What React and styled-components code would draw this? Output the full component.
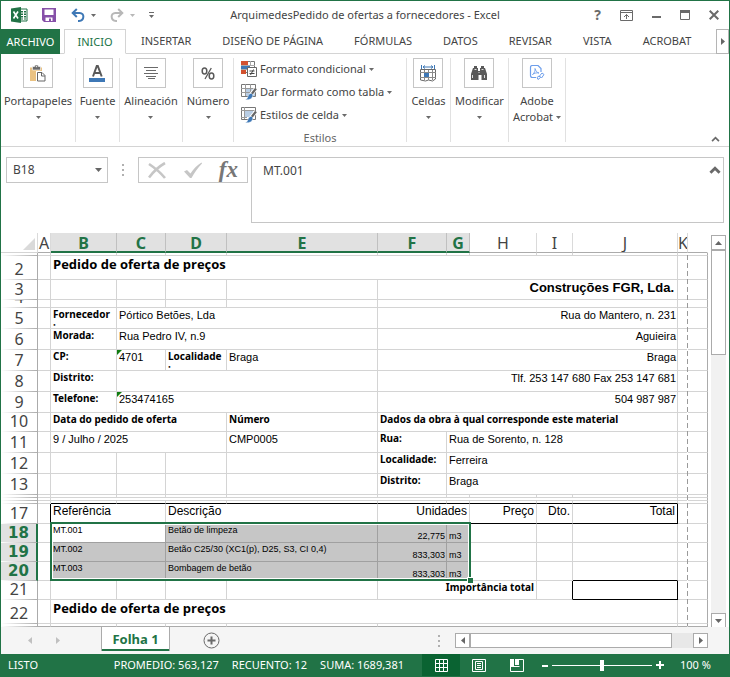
import React from 'react';
import styled, { createGlobalStyle, css } from 'styled-components';

const GREEN = '#217346';
const LINE = '#d4d4d4';
const EDGE = '#ababab';
const INK = '#444444';

const GlobalStyle = createGlobalStyle`
  *, *::before, *::after { box-sizing: border-box; }
  body { margin: 0; background: #fff; font-family: "Noto Sans", "Open Sans", sans-serif; }
  button, input, textarea { font: inherit; color: inherit; margin: 0; padding: 0; border: 0; background: none; border-radius: 0; }
  svg { display: block; flex: none; }
`;

const Window = styled.div`
  display: flex;
  flex-direction: column;
  min-height: 100vh;
  border: 1px solid ${GREEN};
  border-bottom: 0;
  color: ${INK};
  font-size: 12px;
  line-height: 16px;
`;

/* ---------- title bar ---------- */
const TitleBar = styled.header`
  display: grid;
  grid-template-columns: 1fr auto 1fr;
  align-items: center;
  height: 28px;
  padding: 0 10px;
`;
const Title = styled.h1`
  margin: 0;
  font-size: 11px;
  font-weight: 400;
`;
const QuickAccess = styled.div`
  display: flex;
  align-items: center;
  gap: 14px;
`;
const SplitTool = styled.div`
  display: flex;
  align-items: center;
  gap: 6px;
`;
const WindowControls = styled.div`
  display: flex;
  align-items: center;
  justify-content: flex-end;
  gap: 19px;
`;
const IconButton = styled.button`
  display: flex;
  align-items: center;
  justify-content: center;
  color: #6a6a6a;
  font-size: 14px;
  font-weight: 700;
`;

/* ---------- tabs ---------- */
const TabBar = styled.nav`
  display: flex;
  height: 25px;
  font-size: 11px;
`;
const FileTab = styled.button`
  width: 59px;
  background: ${GREEN};
  color: #fff;
`;
const TabGap = styled.span`
  width: ${(p) => (p.$grow ? 'auto' : '4px')};
  flex: ${(p) => (p.$grow ? 1 : 'none')};
  border-bottom: 1px solid ${LINE};
`;
const Tab = styled.button`
  padding: 0 16px 0 15px;
  border-bottom: 1px solid ${LINE};
  white-space: nowrap;
  ${(p) => p.$active && css`
    width: 62px;
    padding: 0;
    border: 1px solid ${LINE};
    border-bottom-color: transparent;
    color: ${GREEN};
  `}
`;
const TabScroll = styled.button`
  display: flex;
  align-items: center;
  justify-content: center;
  width: 13px;
  border: 1px solid #b5b5b5;
`;

/* ---------- ribbon ---------- */
const Ribbon = styled.div`
  display: flex;
  height: 93px;
  padding: 4px 9px 4px 0;
  border-bottom: 1px solid ${LINE};
`;
const Group = styled.section`
  display: flex;
  flex-direction: column;
  align-items: center;
  width: ${(p) => p.$width}px;
  border-right: 1px solid #e1e1e1;
`;
const GroupButton = styled.button`
  display: flex;
  flex-direction: column;
  align-items: center;
  font-size: 11px;
  line-height: 16px;
  white-space: nowrap;
`;
const IconBox = styled.span`
  display: flex;
  align-items: center;
  justify-content: center;
  width: 30px;
  height: 30px;
  margin-bottom: 5px;
  border: 1px solid #c6c6c6;
`;
const LabelLine = styled.span`
  display: flex;
  align-items: center;
  gap: 3px;
  min-height: 16px;
`;
const StyleList = styled.div`
  display: flex;
  flex-direction: column;
  align-self: stretch;
  flex: 1;
  gap: 1px;
  padding-left: 7px;
`;
const StyleButton = styled.button`
  display: flex;
  align-items: center;
  gap: 3px;
  height: 22px;
  font-size: 11px;
  white-space: nowrap;
`;
const GroupCaption = styled.span`
  font-size: 11px;
  line-height: 16px;
  height: 12px;
  color: #666;
`;
const RibbonCollapse = styled.button`
  align-self: flex-end;
  margin-left: auto;
`;

/* ---------- formula bar ---------- */
const FormulaBar = styled.div`
  display: flex;
  align-items: flex-start;
  height: 86px;
  padding: 10px 5px;
`;
const NameBox = styled.div`
  display: flex;
  align-items: center;
  width: 102px;
  height: 26px;
  padding: 0 5px 0 6px;
  border: 1px solid #c6c6c6;
  input { flex: 1; min-width: 0; outline: 0; }
`;
const Grip = styled.span`
  display: flex;
  flex-direction: column;
  align-items: center;
  justify-content: center;
  gap: 3px;
  width: ${(p) => p.$width}px;
  height: 26px;
  &::before, &::after { content: ''; width: 2px; height: 2px; background: #b0b0b0; }
`;
const GripDot = styled.i`
  width: 2px;
  height: 2px;
  background: #b0b0b0;
`;
const FormulaTools = styled.div`
  display: flex;
  align-items: center;
  justify-content: space-between;
  width: 110px;
  height: 26px;
  margin-right: 3px;
  padding: 0 9px;
  border: 1px solid #c6c6c6;
`;
const FormulaField = styled.div`
  display: flex;
  flex: 1;
  height: 66px;
  padding: 5px 2px 4px 11px;
  border: 1px solid #c6c6c6;
  textarea { flex: 1; min-width: 0; resize: none; outline: 0; line-height: 16px; overflow: hidden; }
  button { align-self: flex-start; padding-top: 3px; }
`;

/* ---------- sheet ---------- */
const SheetRow = styled.div`
  display: flex;
  justify-content: space-between;
  padding-right: 3px;
`;
const Sheet = styled.div`
  position: relative;
  flex: 1;
  min-width: 0;
`;
const Grid = styled.table`
  width: 100%;
  table-layout: fixed;
  border-collapse: separate;
  border-spacing: 0;
  color: #000;
  font-family: "Liberation Sans", Arial, sans-serif;
  font-size: 11px;
`;
const Col = styled.col`
  width: ${(p) => (p.$w ? p.$w + 'px' : 'auto')};
`;
const ColHead = styled.th`
  height: 20px;
  padding: 0;
  overflow: hidden;
  border-right: 1px solid ${(p) => (p.$plain ? 'transparent' : p.$on ? '#c0c0c0' : '#dadada')};
  border-bottom: ${(p) => (p.$on ? `2px solid ${GREEN}` : `1px solid ${p.$faint ? LINE : EDGE}`)};
  background: ${(p) => (p.$on ? '#e1e1e1' : '#fff')};
  color: ${(p) => (p.$on ? GREEN : INK)};
  font: ${(p) => (p.$on ? 700 : 400)} 16px/20px "Noto Sans", sans-serif;
  vertical-align: top;
  div { height: ${(p) => (p.$on ? 18 : 19)}px; }
`;
const Corner = styled.div`
  display: flex;
  align-items: flex-end;
  justify-content: flex-end;
  padding: 0 2px 2px 0;
`;
const RowHead = styled.th`
  padding: 0;
  border-bottom: 1px solid transparent;
  border-right: ${(p) => (p.$on ? `2px solid ${GREEN}` : `1px solid ${EDGE}`)};
  background: linear-gradient(to right, #fff, ${EDGE}) left bottom / 100% 1px no-repeat border-box,
    ${(p) => (p.$on ? '#e1e1e1' : '#fff')};
  color: ${(p) => (p.$on ? GREEN : INK)};
  font: ${(p) => (p.$on ? '700 15px/18px "DejaVu Sans"' : '400 16px/20px "Noto Sans"')}, sans-serif;
  div {
    display: flex;
    align-items: flex-end;
    justify-content: center;
    height: ${(p) => p.$h - 1}px;
    overflow: hidden;
  }
`;
const textStyles = {
  text: css`line-height: 15px;`,
  heading: css`font-size: 12px; line-height: 15px;`,
  label: css`font: 700 10px/12px "Noto Sans", sans-serif;`,
  title: css`font: 700 13px/17px "Open Sans", sans-serif;`,
  company: css`font-weight: 700; font-size: 13px; line-height: 15px;`,
  small: css`font-size: 9px; line-height: 12px;`,
};
const Cell = styled.td`
  position: relative;
  padding: 0;
  border-right: 1px solid ${(p) => (p.$br ? '#000' : p.$sel ? '#a0a0a0' : LINE)};
  border-bottom: 1px solid ${(p) => (p.$bb ? '#000' : p.$sel ? '#a0a0a0' : LINE)};
  background: ${(p) => (p.$sel === 'on' ? '#c6c6c6' : '#fff')};
  ${(p) => p.$edge === 'none' && css`border-right-color: transparent;`}
  ${(p) => p.$edge === 'end' && css`border-right-color: ${EDGE};`}
  ${(p) => p.$last && css`border-bottom-color: ${EDGE};`}
  div {
    display: flex;
    align-items: ${(p) => (p.$low ? 'flex-end' : 'flex-start')};
    justify-content: ${(p) => (p.$right ? 'flex-end' : 'flex-start')};
    height: ${(p) => p.$h - 1}px;
    padding: 0 ${(p) => p.$pad || 1}px 0 2px;
    overflow: hidden;
    white-space: nowrap;
    ${(p) => textStyles[p.$kind || 'text']}
  }
  ${(p) => p.$flag && css`
    &::before {
      content: '';
      position: absolute;
      left: 0;
      top: 0;
      border-top: 5px solid #107c10;
      border-right: 5px solid transparent;
    }
  `}
`;
const PageBreak = styled.div`
  position: absolute;
  top: 20px;
  bottom: 1px;
  right: 20px;
  width: 1px;
  background: repeating-linear-gradient(#fff 0 2px, #9a9a9a 2px 7px, #fff 7px 8px);
`;
const Selection = styled.div`
  position: absolute;
  top: 289px;
  left: 49px;
  right: 237px;
  height: 59px;
  border: 2px solid ${GREEN};
  box-shadow: inset 0 0 0 1px #fff;
  pointer-events: none;
  &::after {
    content: '';
    position: absolute;
    right: -4px;
    bottom: -4px;
    width: 6px;
    height: 6px;
    border: solid #fff;
    border-width: 1px 0 0 1px;
    background: ${GREEN};
  }
`;

/* ---------- scroll bars ---------- */
const VScroll = styled.div`
  display: flex;
  flex-direction: column;
  width: 15px;
  margin: 2px 0 -1px 3px;
  background: #f1f1f1;
`;
const HScroll = styled.div`
  display: flex;
  width: 253px;
  height: 15px;
  background: #e8e8e8;
`;
const ScrollButton = styled.button`
  display: flex;
  align-items: center;
  justify-content: center;
  flex: none;
  width: 15px;
  height: 15px;
  border: 1px solid ${EDGE};
  background: #fff;
`;
const Thumb = styled.div`
  border: 1px solid ${EDGE};
  background: #fff;
  ${(p) => (p.$vertical ? 'height: 105px; margin-bottom: auto;' : 'width: 202px; margin-right: auto;')}
`;

/* ---------- sheet tabs ---------- */
const SheetTabs = styled.div`
  display: flex;
  align-items: flex-start;
  height: 27px;
  padding-right: 21px;
  background: #f5f5f5;
`;
const TabArrows = styled.div`
  display: flex;
  align-items: center;
  gap: 24px;
  width: 100px;
  height: 26px;
  padding-left: 27px;
`;
const SheetTab = styled.button`
  width: 69px;
  height: 24px;
  border: 1px solid ${EDGE};
  border-width: 0 1px;
  box-shadow: inset 0 -2px 0 ${GREEN};
  background: #fff;
  color: ${GREEN};
  font-weight: 700;
  font-size: 13px;
`;
const AddSheet = styled.button`
  margin: 5px auto 0 33px;
`;
const HScrollWrap = styled.div`
  display: flex;
  align-items: center;
  height: 27px;
`;

/* ---------- status bar ---------- */
const StatusBar = styled.footer`
  display: flex;
  align-items: center;
  flex: 1;
  min-height: 23px;
  padding: 0 19px 1px 7px;
  background: ${GREEN};
  color: #fff;
  font-size: 11px;
  white-space: nowrap;
`;
const Mode = styled.span`
  flex: 1;
`;
const Stats = styled.div`
  display: flex;
  gap: 13px;
`;
const Views = styled.div`
  display: flex;
  align-self: stretch;
  margin: 0 6px 0 18px;
`;
const ViewButton = styled.button`
  display: flex;
  align-items: center;
  justify-content: center;
  width: 38px;
  height: 22px;
  background: ${(p) => (p.$on ? '#0a6332' : 'transparent')};
`;
const Zoom = styled.div`
  display: flex;
  align-items: center;
  gap: 4px;
`;
const ZoomSlider = styled.input`
  appearance: none;
  width: 100px;
  height: 12px;
  background: linear-gradient(#fff, #fff) center / 100% 1px no-repeat;
  &::-webkit-slider-thumb { appearance: none; width: 4px; height: 11px; background: #fff; }
`;
const ZoomValue = styled.span`
  margin-left: 12px;
  width: 30px;
`;

/* ---------- icons ---------- */
const Caret = ({ color = '#6a6a6a' }) => (
  <svg width="5" height="3" viewBox="0 0 5 3" aria-hidden="true"><path d="M0 0h5L2.500 3z" fill={color} /></svg>
);
const Arrow = ({ dir, color = '#666' }) => {
  const d = { up: 'M0 4h7L3.500 0z', down: 'M0 0h7L3.500 4z', left: 'M4 0v7L0 3.500z', right: 'M0 0v7l4-3.500z' }[dir];
  const wide = dir === 'up' || dir === 'down';
  return (
    <svg width={wide ? 7 : 4} height={wide ? 4 : 7} aria-hidden="true"><path d={d} fill={color} /></svg>
  );
};
const Chevron = ({ w = 9, h = 6, sw = 2 }) => (
  <svg width={w} height={h} viewBox="0 0 10 7" aria-hidden="true">
    <path d="M1 6l4-4 4 4" fill="none" stroke="#6a6a6a" strokeWidth={sw} />
  </svg>
);
const ExcelIcon = () => (
  <svg width="17" height="16" viewBox="0 0 17 16" aria-hidden="true">
    <path d="M9 2h7v12H9z" fill="#fff" stroke={GREEN} />
    <path d="M10 4h2v1.500h-2zM13 4h2v1.500h-2zM10 6.500h2V8h-2zM13 6.500h2V8h-2zM10 9h2v1.500h-2zM13 9h2v1.500h-2zM10 11.500h2v1h-2zM13 11.500h2v1h-2z" fill={GREEN} />
    <path d="M0 1.500L10 0v16L0 14.500z" fill={GREEN} />
    <path d="M2.500 4.500l4.500 7M7 4.500l-4.500 7" stroke="#fff" strokeWidth="1.600" />
  </svg>
);
const SaveIcon = () => (
  <svg width="15" height="15" viewBox="0 0 15 15" aria-hidden="true">
    <path d="M0 0h14v14H2l-2-2z" fill="#8650a8" />
    <path d="M2.500 1.500h9V7h-9zM3.500 9.500h7V13h-1.500v-2.500h-2V13H3.500z" fill="#fff" />
  </svg>
);
const UndoIcon = ({ flip, color }) => (
  <svg width="14" height="15" viewBox="0 0 14 15" aria-hidden="true">
    <g transform={flip ? 'translate(14 0) scale(-1 1)' : undefined} fill="none" stroke={color} strokeWidth="2">
      <path d="M1.500 5h7.200c5 0 5 7.500-.7 8H7" />
      <path d="M5.800 1L1.700 5l4.100 4" />
    </g>
  </svg>
);
const CustomizeIcon = () => (
  <svg width="5" height="6" viewBox="0 0 5 6" aria-hidden="true">
    <path d="M0 0h5v1H0zM0 3h5L2.500 6z" fill="#6a6a6a" />
  </svg>
);
const RibbonOptionsIcon = () => (
  <svg width="13" height="11" viewBox="0 0 13 11" aria-hidden="true" fill="none" stroke="#6a6a6a">
    <path d="M.5.5h12v10H.5zM.5 2.500h12M6.500 9V4.500M4 7l2.500-2.500L9 7" />
  </svg>
);
const MinimizeIcon = () => <svg width="9" height="11" aria-hidden="true"><path d="M0 6h9v2H0z" fill="#6a6a6a" /></svg>;
const MaximizeIcon = () => (
  <svg width="10" height="10" aria-hidden="true"><path d="M.5.5h9v9h-9z" fill="none" stroke="#6a6a6a" /><path d="M0 0h10v3H0z" fill="#6a6a6a" /></svg>
);
const CloseIcon = () => (
  <svg width="10" height="10" viewBox="0 0 10 10" aria-hidden="true"><path d="M.7.7l8.600 8.600M9.300.7L.7 9.300" stroke="#6a6a6a" strokeWidth="2" /></svg>
);
const PasteIcon = () => (
  <svg width="16" height="17" viewBox="0 0 16 17" aria-hidden="true">
    <path d="M0 2.500h12V16H0z" fill="#eac282" />
    <path d="M2.500 1.500h2L5 0h3l.5 1.500h2V5h-8z" fill="#6a6a6a" stroke="#fff" strokeWidth=".6" />
    <path d="M5.800 1.200h1.400v1H5.800z" fill="#fff" />
    <path d="M7 7h5.500L15.500 10v6.500H7z" fill="#fff" stroke="#fff" strokeWidth="2" />
    <path d="M7.500 7.500h4.500l3 3v5.500H7.500zM11.500 7.500V11H15" fill="#fff" stroke="#666" />
  </svg>
);
const FontIcon = () => (
  <svg width="17" height="17" viewBox="0 0 17 17" aria-hidden="true">
    <path d="M4 11.500L7.800 1h1L12.700 11.500M5.500 8h5.800" fill="none" stroke="#595959" strokeWidth="2" />
    <path d="M0 13h16v4H0z" fill="#3e78b6" />
  </svg>
);
const AlignIcon = () => (
  <svg width="14" height="12" aria-hidden="true"><path d="M0 .5h14M2 3.500h10M0 6.500h14M2 9.500h10M4 11.500h7" stroke="#6a6a6a" /></svg>
);
const PercentIcon = () => (
  <svg width="14" height="13" viewBox="0 0 14 13" aria-hidden="true" fill="none" stroke="#595959">
    <ellipse cx="3.500" cy="4" rx="2.300" ry="3" strokeWidth="1.500" />
    <ellipse cx="10.500" cy="9" rx="2.300" ry="3" strokeWidth="1.500" />
    <path d="M10.300 1L4 12" strokeWidth="1.300" />
  </svg>
);
const CondFormatIcon = () => (
  <svg width="16" height="16" viewBox="0 0 16 16" aria-hidden="true">
    <path d="M.5.5h13v11H.5z" fill="#fff" stroke="#777" />
    <path d="M0 0h7v4H0z" fill="#d35230" /><path d="M0 5h9v3H0z" fill="#3e78b6" /><path d="M0 9h5v4H0z" fill="#d35230" />
    <path d="M9.500 0v5M0 4.500h14M0 8.500h7" stroke="#aaa" />
    <path d="M6.500 6.500h9v9h-9z" fill="#fff" stroke="#666" />
    <path d="M8.500 10h5M8.500 12.500h5M12.500 8.500l-3 5.500" stroke="#444" />
  </svg>
);
const TableFormatIcon = ({ cell }) => (
  <svg width="16" height="16" viewBox="0 0 16 16" aria-hidden="true">
    <path d="M.5.5h14v12H.5z" fill="#fff" stroke="#777" />
    <path d={cell ? 'M4 4h8v6H4z' : 'M5 5h9v7H5z'} fill="#b8cde4" />
    <path d={cell ? 'M0 3.500h14M3.500 0v12M0 10.500h6' : 'M0 4.500h14M4.500 0v12M9.500 0v12M0 8.500h14'} stroke="#999" />
    <path d="M15 4.500l-5 6" stroke="#fff" strokeWidth="4" />
    <path d="M15 4.500l-4.500 5.700" stroke="#666" strokeWidth="2.200" />
    <path d="M10.500 9.500c2 1 1.500 3 .3 4.500-1.500 1.800-4.500 2-6.800 1.500 2.500-.5 2.500-2 3.200-3.800.6-1.500 1.900-2.500 3.300-2.200z" fill="#3e78b6" stroke="#fff" strokeWidth=".5" />
  </svg>
);
const CellsIcon = () => (
  <svg width="16" height="17" viewBox="0 0 16 17" aria-hidden="true">
    <path d="M1.500 0v4M14.500 0v4M3 2h10M5 .5L3 2l2 1.500M11 .5L13 2l-2 1.500" fill="none" stroke="#3e78b6" />
    <path d="M.5 4.500h15V14l-3 2-4-1-3 1-5-1z" fill="#fff" stroke="#6a6a6a" />
    <path d="M0 7.500h16M0 12.500h16M4.500 5v10M8.500 5v10M12.500 5v10" stroke="#8a8a8a" />
    <path d="M4 8h5v4H4z" fill="#3e78b6" />
  </svg>
);
const FindIcon = () => (
  <svg width="16" height="14" viewBox="0 0 16 14" aria-hidden="true">
    <path d="M3 0h3v2h1v3h2V2h1V0h3v2h1l2 6v6h-5.500V9h-3v5H0V8l2-6h1z" fill="#595959" />
    <path d="M3.500 3.500h2M10.500 3.500h2M1.500 12V9M13.500 9v3M7.500 6.500h1" stroke="#fff" strokeWidth=".8" />
  </svg>
);
const AdobeIcon = () => (
  <svg width="16" height="16" viewBox="0 0 16 16" aria-hidden="true" fill="none" stroke="#6d9eeb">
    <path d="M7 12.500H3.500c-1.300 0-2-.7-2-2v-8c0-1.300.7-2 2-2H9l3 3V7" strokeWidth="1.200" />
    <path d="M3.500 9.500C5.500 8 6.500 5.500 6 3.500c1 3 2 4 4 4.500-2-.5-4.500 0-6.500 1.500z" strokeWidth=".9" />
    <path d="M9 14.500l-1-2 2-1.500 1.500 1.500zM10.500 11l2.500-3 2 1.500-2.500 3.500z" />
  </svg>
);
const CancelIcon = () => (
  <svg width="19" height="17" viewBox="0 0 19 17" aria-hidden="true"><path d="M1 2c6 4 11 8 16 14M17 1C10 5 5 10 1 15.500" fill="none" stroke="#c6c6c6" strokeWidth="2.600" /></svg>
);
const CheckIcon = () => (
  <svg width="20" height="17" viewBox="0 0 20 17" aria-hidden="true"><path d="M1 9.500l3-1.500 3.500 3.500C10.500 7 14 3 18.500.500l.5 1C15 5.500 11.500 10.500 8.500 16H7z" fill="#c6c6c6" /></svg>
);
const FxMark = styled.span`
  font: italic 700 23px/24px "Liberation Serif", serif;
  color: #777;
`;
const SelectAllIcon = () => <svg width="12" height="12" aria-hidden="true"><path d="M12 0v12H0z" fill="#dadada" /></svg>;
const AddIcon = () => (
  <svg width="17" height="17" viewBox="0 0 17 17" aria-hidden="true" fill="none" stroke="#6a6a6a">
    <circle cx="8.500" cy="8.500" r="7.500" /><path d="M8.500 4.500v8M4.500 8.500h8" strokeWidth="2" />
  </svg>
);
const NormalViewIcon = () => (
  <svg width="13" height="13" aria-hidden="true"><path d="M.5.5h12v12H.5zM4.500 0v13M8.500 0v13M0 4.500h13M0 8.500h13" fill="none" stroke="#fff" /></svg>
);
const PageViewIcon = () => (
  <svg width="14" height="13" aria-hidden="true"><path d="M.5.5h13v12H.5zM3.500 2.500h7v8h-7zM5 4.500h4M5 6.500h4M5 8.500h4" fill="none" stroke="#fff" /></svg>
);
const BreakViewIcon = () => (
  <svg width="14" height="13" aria-hidden="true">
    <path d="M9 .5h4.500v12H.5V7M0 7.500h9.500" fill="none" stroke="#fff" />
    <path d="M0 0h4v8H0zM5 0h4v6H5z" fill="#fff" />
  </svg>
);
const MinusIcon = () => <svg width="6" height="9" aria-hidden="true"><path d="M0 4h6v2H0z" fill="#fff" /></svg>;
const PlusIcon = () => <svg width="8" height="8" aria-hidden="true"><path d="M0 3h8v2H0zM3 0h2v8H3z" fill="#fff" /></svg>;

/* ---------- data ---------- */
const TABS = ['INSERTAR', 'DISEÑO DE PÁGINA', 'FÓRMULAS', 'DATOS', 'REVISAR', 'VISTA', 'ACROBAT'];
const GROUPS_LEFT = [
  { label: 'Portapapeles', width: 75, Icon: PasteIcon },
  { label: 'Fuente', width: 44, Icon: FontIcon },
  { label: 'Alineación', width: 63, Icon: AlignIcon },
  { label: 'Número', width: 51, Icon: PercentIcon },
];
const GROUPS_RIGHT = [
  { label: 'Celdas', width: 44, Icon: CellsIcon },
  { label: 'Modificar', width: 58, Icon: FindIcon },
  { label: 'Adobe', second: 'Acrobat', width: 57, Icon: AdobeIcon },
];
const COLUMNS = [
  ['A', 13], ['B', 66], ['C', 49], ['D', 61], ['E', 0], ['F', 69], ['G', 23], ['H', 67], ['I', 36], ['J', 105], ['K', 10],
];
const SELECTED_COLS = 'BCDEFG';

const label = (t, span = 1, more) => ({ t, span, kind: 'label', ...more });
const text = (t, span = 1, more) => ({ t, span, ...more });
const right = (t, span, more) => ({ t, span, right: true, ...more });
const blank = (span = 1, more) => ({ span, ...more });
const blanks = (...spans) => spans.map((s) => blank(s));
const itemRow = (n, ref, name, qty, last) => ({
  n, h: 19, on: true,
  cells: [
    text(ref, 2, { kind: 'small', sel: n === 18 ? 'active' : 'on' }),
    text(name, 2, { kind: 'small', sel: 'on' }),
    right(qty, 1, { kind: 'small', sel: 'on', low: true }),
    text('m3', 1, { kind: 'small', sel: 'on', low: true }),
    blank(), blank(), blank(1, { bb: last }),
  ],
});
const black = { bb: true };
const heading = { kind: 'heading', bb: true, pad: 2 };

const ROWS = [
  { n: '', h: 3, cells: blanks(1, 1, 1, 1, 1, 1, 1, 1, 1) },
  { n: 2, h: 24, cells: [text('Pedido de oferta de preços', 9, { kind: 'title' })] },
  { n: 3, h: 20, cells: [...blanks(1, 1, 1, 1), right('Construções FGR, Lda.', 5, { kind: 'company', pad: 3 })] },
  { n: 4, h: 8, cells: blanks(1, 1, 1, 1, 5) },
  { n: 5, h: 21, cells: [label(<>Fornecedor<br />:</>), text('Pórtico Betões, Lda', 3), right('Rua do Mantero, n. 231', 5)] },
  { n: 6, h: 21, cells: [label('Morada:'), text('Rua Pedro IV, n.9', 3), right('Aguieira', 5)] },
  { n: 7, h: 21, cells: [label('CP:'), text('4701', 1, { flag: true }), label(<>Localidade<br />:</>), text('Braga'), right('Braga', 5)] },
  { n: 8, h: 21, cells: [label('Distrito:'), blank(3), right('Tlf. 253 147 680 Fax 253 147 681', 5)] },
  { n: 9, h: 21, cells: [label('Telefone:'), text('253474165', 3, { flag: true }), right('504 987 987', 5)] },
  { n: 10, h: 19, cells: [label('Data do pedido de oferta', 3), label('Número'), label('Dados da obra à qual corresponde este material', 5)] },
  { n: 11, h: 21, cells: [text('9 / Julho / 2025', 3), text('CMP0005'), label('Rua:'), text('Rua de Sorento, n. 128', 4)] },
  { n: 12, h: 21, cells: [...blanks(1, 1, 1, 1), label('Localidade:'), text('Ferreira', 4)] },
  { n: 13, h: 21, cells: [...blanks(1, 1, 1, 1), label('Distrito:'), text('Braga', 4)] },
  { n: '', h: 3, cells: blanks(1, 1, 1, 1, 1, 1, 1, 1, 1) },
  { n: '', h: 3, cells: blanks(9) },
  { n: '', h: 3, cells: [1, 1, 1, 1, 1, 1, 1, 1, 1].map((s) => blank(s, black)) },
  {
    n: 17, h: 20, aBlack: true,
    cells: [
      text('Referência', 2, heading), text('Descrição', 2, heading), right('Unidades', 2, heading),
      right('Preço', 1, heading), right('Dto.', 1, heading), right('Total', 1, { ...heading, br: true }),
    ],
  },
  itemRow(18, 'MT.001', 'Betão de limpeza', '22,775'),
  itemRow(19, 'MT.002', 'Betão C25/30 (XC1(p), D25, S3, CI 0,4)', '833,303'),
  itemRow(20, 'MT.003', 'Bombagem de betão', '833,303', true),
  { n: 21, h: 19, cells: [...blanks(1, 1, 1, 1), label('Importância total', 3, { right: true, pad: 2 }), blank(1, { br: true }), blank(1, { bb: true, br: true })] },
  { n: 22, h: 24, cells: [text('Pedido de oferta de preços', 9, { kind: 'title' })] },
  { n: '', h: 3, last: true, cells: blanks(1, 1, 1, 1, 5) },
];

const RibbonGroup = ({ label: name, second, width, Icon }) => (
  <Group $width={width}>
    <GroupButton type="button">
      <IconBox><Icon /></IconBox>
      <LabelLine>{name}</LabelLine>
      <LabelLine>{second}<Caret /></LabelLine>
    </GroupButton>
  </Group>
);

const SheetGrid = () => (
  <Sheet>
    <Grid>
      <colgroup>
        <Col $w={37} />
        {COLUMNS.map(([c, w]) => <Col key={c} $w={w} />)}
        <Col $w={20} />
      </colgroup>
      <thead>
        <tr>
          <ColHead $faint><Corner><SelectAllIcon /></Corner></ColHead>
          {COLUMNS.map(([c]) => <ColHead key={c} scope="col" $on={SELECTED_COLS.includes(c)}><div>{c}</div></ColHead>)}
          <ColHead $plain><div /></ColHead>
        </tr>
      </thead>
      <tbody>
        {ROWS.map((r, i) => (
          <tr key={i}>
            <RowHead scope="row" $h={r.h} $on={r.on}><div>{r.n}</div></RowHead>
            <Cell $h={r.h} $br={r.aBlack} $last={r.last}><div /></Cell>
            {r.cells.map((c, j) => (
              <Cell
                key={j}
                colSpan={c.span}
                $h={r.h}
                $kind={c.kind}
                $right={c.right}
                $low={c.low}
                $pad={c.pad}
                $sel={c.sel}
                $br={c.br}
                $bb={c.bb}
                $flag={c.flag}
                $last={r.last}
              >
                <div><span>{c.t}</span></div>
              </Cell>
            ))}
            <Cell $h={r.h} $edge="none" $last={r.last}><div /></Cell>
            <Cell $h={r.h} $edge="end" $last={r.last}><div /></Cell>
          </tr>
        ))}
      </tbody>
    </Grid>
    <PageBreak />
    <Selection />
  </Sheet>
);

export default function App() {
  return (
    <>
      <GlobalStyle />
      <Window>
        <TitleBar>
          <QuickAccess>
            <ExcelIcon />
            <IconButton type="button" aria-label="Guardar"><SaveIcon /></IconButton>
            <SplitTool>
              <IconButton type="button" aria-label="Deshacer"><UndoIcon color="#3e78b6" /></IconButton>
              <Caret />
            </SplitTool>
            <SplitTool>
              <IconButton type="button" aria-label="Rehacer"><UndoIcon flip color="#b8b8b8" /></IconButton>
              <Caret color="#b8b8b8" />
            </SplitTool>
            <IconButton type="button" aria-label="Personalizar"><CustomizeIcon /></IconButton>
          </QuickAccess>
          <Title>ArquimedesPedido de ofertas a fornecedores - Excel</Title>
          <WindowControls>
            <IconButton type="button">?</IconButton>
            <IconButton type="button" aria-label="Opciones de la cinta"><RibbonOptionsIcon /></IconButton>
            <IconButton type="button" aria-label="Minimizar"><MinimizeIcon /></IconButton>
            <IconButton type="button" aria-label="Maximizar"><MaximizeIcon /></IconButton>
            <IconButton type="button" aria-label="Cerrar"><CloseIcon /></IconButton>
          </WindowControls>
        </TitleBar>

        <TabBar>
          <FileTab type="button">ARCHIVO</FileTab>
          <TabGap />
          <Tab type="button" $active>INICIO</Tab>
          {TABS.map((t) => <Tab key={t} type="button">{t}</Tab>)}
          <TabGap $grow />
          <TabScroll type="button" aria-label="Más fichas"><Arrow dir="right" /></TabScroll>
        </TabBar>

        <Ribbon>
          {GROUPS_LEFT.map((g) => <RibbonGroup key={g.label} {...g} />)}
          <Group $width={173}>
            <StyleList>
              <StyleButton type="button"><CondFormatIcon />Formato condicional<Caret /></StyleButton>
              <StyleButton type="button"><TableFormatIcon />Dar formato como tabla<Caret /></StyleButton>
              <StyleButton type="button"><TableFormatIcon cell />Estilos de celda<Caret /></StyleButton>
            </StyleList>
            <GroupCaption>Estilos</GroupCaption>
          </Group>
          {GROUPS_RIGHT.map((g) => <RibbonGroup key={g.label} {...g} />)}
          <RibbonCollapse type="button" aria-label="Contraer la cinta"><Chevron /></RibbonCollapse>
        </Ribbon>

        <FormulaBar>
          <NameBox>
            <input aria-label="Cuadro de nombres" defaultValue="B18" />
            <Arrow dir="down" />
          </NameBox>
          <Grip $width={30}><GripDot /></Grip>
          <FormulaTools>
            <IconButton type="button" aria-label="Cancelar"><CancelIcon /></IconButton>
            <IconButton type="button" aria-label="Introducir"><CheckIcon /></IconButton>
            <IconButton type="button" aria-label="Insertar función"><FxMark>fx</FxMark></IconButton>
          </FormulaTools>
          <FormulaField>
            <textarea aria-label="Barra de fórmulas" defaultValue="MT.001" />
            <button type="button" aria-label="Contraer la barra"><Chevron w={12} h={8} sw={2.500} /></button>
          </FormulaField>
        </FormulaBar>

        <SheetRow>
          <SheetGrid />
          <VScroll>
            <ScrollButton type="button" aria-label="Arriba"><Arrow dir="up" /></ScrollButton>
            <Thumb $vertical />
            <ScrollButton type="button" aria-label="Abajo"><Arrow dir="down" /></ScrollButton>
          </VScroll>
        </SheetRow>

        <SheetTabs>
          <TabArrows>
            <Arrow dir="left" color="#c0c0c0" />
            <Arrow dir="right" color="#c0c0c0" />
          </TabArrows>
          <SheetTab type="button">Folha 1</SheetTab>
          <AddSheet type="button" aria-label="Hoja nueva"><AddIcon /></AddSheet>
          <HScrollWrap>
            <Grip $width={32}><GripDot /></Grip>
            <HScroll>
              <ScrollButton type="button" aria-label="Izquierda"><Arrow dir="left" /></ScrollButton>
              <Thumb />
              <ScrollButton type="button" aria-label="Derecha"><Arrow dir="right" /></ScrollButton>
            </HScroll>
          </HScrollWrap>
        </SheetTabs>

        <StatusBar>
          <Mode>LISTO</Mode>
          <Stats>
            <span>PROMEDIO: 563,127</span>
            <span>RECUENTO: 12</span>
            <span>SUMA: 1689,381</span>
          </Stats>
          <Views>
            <ViewButton type="button" $on aria-label="Normal"><NormalViewIcon /></ViewButton>
            <ViewButton type="button" aria-label="Diseño de página"><PageViewIcon /></ViewButton>
            <ViewButton type="button" aria-label="Saltos de página"><BreakViewIcon /></ViewButton>
          </Views>
          <Zoom>
            <IconButton type="button" aria-label="Alejar"><MinusIcon /></IconButton>
            <ZoomSlider type="range" min="0" max="100" defaultValue="50" aria-label="Zoom" />
            <IconButton type="button" aria-label="Acercar"><PlusIcon /></IconButton>
            <ZoomValue>100 %</ZoomValue>
          </Zoom>
        </StatusBar>
      </Window>
    </>
  );
}
